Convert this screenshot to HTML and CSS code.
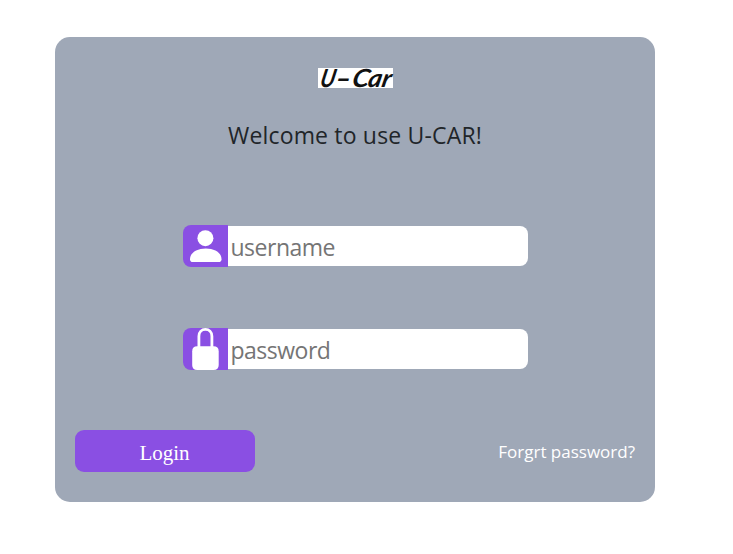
FILE: index.html
```
<!DOCTYPE html>
<html lang="en">
<head>
<meta charset="utf-8">
<title>U-Car</title>
<link rel="stylesheet" href="styles.css">
</head>
<body>
<main class="card">
  <svg class="logo" viewBox="0 0 75 20" role="img">
    <text class="logo-text" transform="translate(1 19) skewX(-12)" textLength="15" lengthAdjust="spacingAndGlyphs">U</text>
    <text class="logo-text" transform="translate(18 18.5)" textLength="15" lengthAdjust="spacingAndGlyphs">-</text>
    <text class="logo-text" transform="translate(33 19) skewX(-12)" textLength="17" lengthAdjust="spacingAndGlyphs">C</text>
    <text class="logo-text" transform="translate(49 19) skewX(-12)" textLength="23" lengthAdjust="spacingAndGlyphs">ar</text>
  </svg>
  <h1 class="welcome"><span>Welcome to use U-CAR!</span></h1>
  <form class="form">
    <div class="field">
      <span class="icon"><svg width="45" height="42" viewBox="0 0 45 42"><circle cx="22.4" cy="13.2" r="8"/><path d="M7 34.2C7 27.8 13.8 23.5 22.8 23.5S38.5 27.8 38.5 34.2Q38.5 37 35.7 37H9.8Q7 37 7 34.2Z"/></svg></span>
      <input class="input user" type="text" placeholder="username">
    </div>
    <div class="field">
      <span class="icon"><svg width="45" height="42" viewBox="0 0 45 42"><path class="shackle" d="M15.9 20V8.3C15.9 4.2 18.8 1.4 22.4 1.4S28.9 4.2 28.9 8.3V20"/><path d="M14.3 18.2H30.5Q35.7 18.2 35.7 23.2V37Q35.7 42 30.5 42H14.3Q9.2 42 9.2 37V23.2Q9.2 18.2 14.3 18.2Z"/></svg></span>
      <input class="input pass" type="text" placeholder="password">
    </div>
    <div class="actions">
      <button class="login" type="button">Login</button>
      <a class="forgot">Forgrt password?</a>
    </div>
  </form>
</main>
</body>
</html>
```
FILE: styles.css
```
* { box-sizing: border-box; }
body { margin: 0; background: #fff; font-family: "Noto Sans", sans-serif; }
.card {
  width: 600px; height: 465px; margin: 37px 0 0 55px; padding: 31px 20px 30px;
  display: flex; flex-direction: column; align-items: center;
  background: #9fa8b7; border-radius: 15px;
}
.logo { width: 75px; height: 20px; background: #fff; flex: none; overflow: visible; }
.logo-text { font: italic 700 25px Lato, sans-serif; fill: #111; }
.welcome {
  margin: 29px 0 0; height: 36px; line-height: 36px; white-space: nowrap;
  font-family: "Open Sans", sans-serif; font-size: 23px; font-weight: 400;
  letter-spacing: 0.17px; color: #212529;
}
.form { width: 100%; margin-top: 72px; display: flex; flex-direction: column; align-items: center; }
.field { display: flex; align-items: center; height: 42px; margin-bottom: 61px; }
.field + .field { margin-bottom: 60px; }
.icon { width: 45px; height: 42px; background: #8a4fe3; border-radius: 8px 0 0 8px; }
.icon svg { display: block; fill: #fff; }
.shackle { fill: none; stroke: #fff; stroke-width: 2.8; }
.input {
  width: 300px; height: 40px; padding: 1px 3px 0; border: 0; outline: 0;
  border-radius: 0 8px 8px 0; background: #fff;
  font: 23px "Open Sans", sans-serif; letter-spacing: -0.5px;
}
.input::placeholder { color: #757575; opacity: 1; }
.actions { width: 100%; display: flex; justify-content: space-between; align-items: center; }
.login {
  width: 180px; height: 42px; padding: 4px 1px 0 0; border: 0; border-radius: 9px;
  background: #8a4fe3; color: #fff; font: 21px "Liberation Serif", serif;
}
.forgot { color: #fff; font: 17px "Open Sans", sans-serif; }
```
